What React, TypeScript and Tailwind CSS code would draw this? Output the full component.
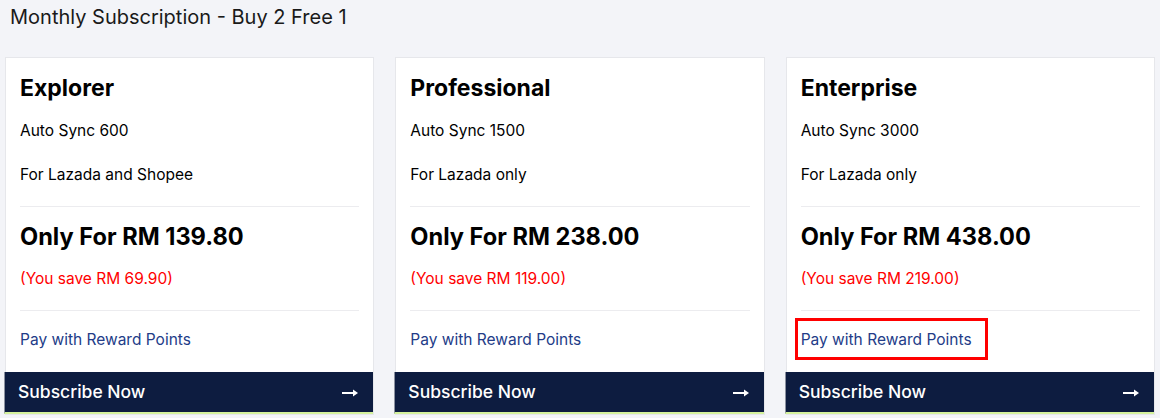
import React from 'react';

type Plan = {
  name: string;
  sync: string;
  market: string;
  price: string;
  save: string;
  highlight?: boolean;
};

const plans: Plan[] = [
  { name: 'Explorer', sync: 'Auto Sync 600', market: 'For Lazada and Shopee', price: 'RM 139.80', save: 'RM 69.90' },
  { name: 'Professional', sync: 'Auto Sync 1500', market: 'For Lazada only', price: 'RM 238.00', save: 'RM 119.00' },
  { name: 'Enterprise', sync: 'Auto Sync 3000', market: 'For Lazada only', price: 'RM 438.00', save: 'RM 219.00', highlight: true },
];

function Arrow() {
  return (
    <svg width="17" height="10" viewBox="0 0 17 10" fill="none">
      <path d="M0 5h14" stroke="white" strokeWidth="2" />
      <path d="M11 1.5L16 5l-5 3.5z" fill="white" />
    </svg>
  );
}

export default function App() {
  return (
    <div className="min-h-[418px] w-[1160px] bg-[#f3f4f8] text-black" style={{ fontFamily: 'Inter, "Noto Sans", sans-serif' }}>
      <h1 className="pl-[10px] pt-[3px] text-[20px] leading-[28px] font-normal text-[#1a1a1a]">
        Monthly Subscription - Buy 2 Free 1
      </h1>
      <div className="mt-[26px] grid grid-cols-3 gap-[21px] px-[5px]">
        {plans.map((p) => (
          <div key={p.name} className="flex flex-col border border-[#e6e7eb] bg-white">
            <div className="px-[14px] pt-[14px]">
              <h2 className="text-[23px] leading-[32px] font-bold">{p.name}</h2>
              <p className="mt-[16px] text-[15.5px] leading-[22px]">{p.sync}</p>
              <p className="mt-[22px] text-[15.5px] leading-[22px]">{p.market}</p>
              <div className="mt-[20px] h-px bg-[#ececef]" />
              <p className="mt-[14px] text-[23.6px] leading-[32px] font-bold">Only For {p.price}</p>
              <p className="mt-[15px] text-[15.5px] leading-[22px] text-[#ff0000]">(You save {p.save})</p>
              <div className="mt-[20px] h-px bg-[#ececef]" />
              <a
                href="#"
                className={`-ml-[6px] mt-[7px] inline-block border-[3px] pt-[8px] pb-[6px] pl-[3px] pr-[13px] text-[15.5px] leading-[22px] text-[#233c88] ${
                  p.highlight ? 'border-[#ff0000]' : 'border-transparent'
                }`}
              >
                Pay with Reward Points
              </a>
            </div>
            <button className="-ml-[2px] mt-[12px] flex h-[42px] items-center justify-between border-b-2 border-l border-b-[#d5f29c] border-l-[#8b91a0] bg-[#0d1c40] pl-[13px] pr-[14px] pt-[1px] text-[17.5px] font-medium text-white">
              <span>Subscribe Now</span>
              <Arrow />
            </button>
          </div>
        ))}
      </div>
    </div>
  );
}
